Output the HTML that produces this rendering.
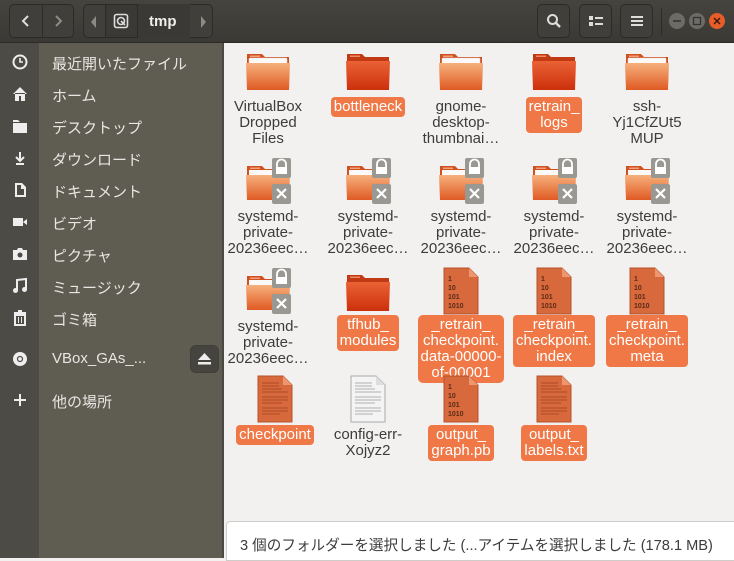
<!DOCTYPE html>
<html><head><meta charset="utf-8"><style>
*{margin:0;padding:0;box-sizing:border-box}
body{width:734px;height:558px;overflow:hidden;background:#f2f1f0;font-family:"Liberation Sans","Noto Sans CJK JP",sans-serif;position:relative}
.hdr{position:absolute;left:0;top:0;width:734px;height:43px;background:linear-gradient(#45443f,#3a3935);border-bottom:1px solid #2b2a27}
.btn{position:absolute;top:4px;height:34px;border:1px solid #2c2b28;border-radius:5px;background:#403f3b}
.side1{position:absolute;left:0;top:43px;width:39px;height:515px;background:#4c4b45}
.side2{position:absolute;left:39px;top:43px;width:185px;height:515px;background:#5f5c52;border-right:2px solid #4a4943}
.si{position:absolute;left:52px;color:#e8e6e1;font-size:15px}
.ic{position:absolute;left:11px;width:18px;height:18px}
.it{position:absolute;width:100px;text-align:center;font-size:15px;line-height:16px;color:#3c3c3c}
.it .ico{display:block;margin:0 auto}
.sel{display:inline-block;background:#ef7846;color:#fff;border-radius:4px;padding:2px 3px}
.status{position:absolute;left:226px;top:521px;width:510px;height:40px;background:#fff;border:1px solid #cfcdca;border-radius:4px 0 0 0;font-size:14.6px;color:#3c3c3c;padding:12px 0 0 13px;white-space:nowrap}
</style></head><body>
<div class="hdr">
 <div class="btn" style="left:9px;width:65px"><div style="position:absolute;left:32px;top:0;width:1px;height:32px;background:#2c2b28"></div>
  <svg style="position:absolute;left:8px;top:8px" width="16" height="16"><path d="M10 3 L5 8 L10 13" stroke="#ddd" stroke-width="2" fill="none"/></svg>
  <svg style="position:absolute;left:40px;top:8px" width="16" height="16"><path d="M6 3 L11 8 L6 13" stroke="#8d8b86" stroke-width="2" fill="none"/></svg></div>
 <div class="btn" style="left:83px;width:130px"><svg style="position:absolute;left:6px;top:11px" width="8" height="12"><path d="M6 0 L1 6 L6 12Z" fill="#8d8b86"/></svg>
  <div style="position:absolute;left:21px;top:-1px;width:33px;height:34px;background:#3a3935;border:1px solid #2c2b28"></div>
  <svg style="position:absolute;left:29px;top:8px" width="16" height="16"><rect x="1.5" y="1.5" width="13" height="13" rx="2" fill="none" stroke="#ddd" stroke-width="1.6"/><circle cx="8" cy="8" r="3.5" fill="none" stroke="#ddd" stroke-width="1.6"/><path d="M8 8 L12 12" stroke="#ddd" stroke-width="1.6"/></svg>
  <div style="position:absolute;left:54px;top:-1px;width:52px;height:34px;background:#3a3935"></div>
  <span style="position:absolute;left:65px;top:8px;color:#eee;font-weight:bold;font-size:15px">tmp</span>
  <svg style="position:absolute;left:116px;top:11px" width="8" height="12"><path d="M1 0 L6 6 L1 12Z" fill="#8d8b86"/></svg></div>
 <div class="btn" style="left:537px;width:33px"><svg style="position:absolute;left:8px;top:8px" width="16" height="16"><circle cx="6.5" cy="6.5" r="4.5" fill="none" stroke="#ddd" stroke-width="2"/><path d="M10 10 L14 14" stroke="#ddd" stroke-width="2.4"/></svg></div>
 <div class="btn" style="left:579px;width:33px"><svg style="position:absolute;left:8px;top:9px" width="16" height="14"><rect x="1" y="2" width="4" height="4" fill="#ddd"/><rect x="1" y="8" width="4" height="4" fill="#ddd"/><rect x="7" y="3" width="8" height="2" fill="#ddd"/><rect x="7" y="9" width="8" height="2" fill="#ddd"/></svg></div>
 <div class="btn" style="left:620px;width:33px"><svg style="position:absolute;left:9px;top:9px" width="14" height="14"><rect x="1" y="2" width="12" height="2" fill="#ddd"/><rect x="1" y="6" width="12" height="2" fill="#ddd"/><rect x="1" y="10" width="12" height="2" fill="#ddd"/></svg></div>
 <div style="position:absolute;left:661px;top:8px;width:1px;height:27px;background:#2c2b28"></div>
 <svg style="position:absolute;left:668px;top:11px" width="62" height="20"><circle cx="9" cy="10" r="8" fill="#6d6b66"/><path d="M5 10h8" stroke="#333" stroke-width="1.5"/><circle cx="29" cy="10" r="8" fill="#6d6b66"/><rect x="25.5" y="6.5" width="7" height="7" fill="none" stroke="#333" stroke-width="1.3"/><circle cx="49" cy="10" r="8" fill="#e75d28"/><path d="M46 7l6 6M52 7l-6 6" stroke="#3a1a10" stroke-width="1.5"/></svg>
</div>
<div class="side1"></div><div class="side2"></div>
<svg class="ic" style="top:53px" viewBox="0 0 18 18"><circle cx="9" cy="9" r="6.5" fill="none" stroke="#eee" stroke-width="2"/><path d="M9 5v4h3" stroke="#eee" stroke-width="1.6" fill="none"/></svg>
<div class="si" style="top:53px">最近開いたファイル</div>
<svg class="ic" style="top:85px" viewBox="0 0 18 18"><path d="M2 9 L9 2 L16 9 M4 8v8h4v-5h2v5h4V8" fill="#eee"/></svg>
<div class="si" style="top:85px">ホーム</div>
<svg class="ic" style="top:117px" viewBox="0 0 18 18"><path d="M2 3h5l2 2h-7z M2 6h14v10H2z" fill="#eee"/></svg>
<div class="si" style="top:117px">デスクトップ</div>
<svg class="ic" style="top:149px" viewBox="0 0 18 18"><path d="M9 3v8 M5 8l4 4 4-4 M5 15h8" stroke="#eee" stroke-width="2" fill="none"/></svg>
<div class="si" style="top:149px">ダウンロード</div>
<svg class="ic" style="top:181px" viewBox="0 0 18 18"><path d="M4 2h7l4 4v10H4z" fill="#eee"/><path d="M6 4h4v4h3v6H6z" fill="#4c4b45"/></svg>
<div class="si" style="top:181px">ドキュメント</div>
<svg class="ic" style="top:213px" viewBox="0 0 18 18"><rect x="2" y="5" width="10" height="8" fill="#eee"/><path d="M12 9l4-3v6z" fill="#eee"/></svg>
<div class="si" style="top:213px">ビデオ</div>
<svg class="ic" style="top:245px" viewBox="0 0 18 18"><path d="M2 5h4l1-2h4l1 2h4v10H2z" fill="#eee"/><circle cx="9" cy="10" r="2.5" fill="#4c4b45"/></svg>
<div class="si" style="top:245px">ピクチャ</div>
<svg class="ic" style="top:277px" viewBox="0 0 18 18"><path d="M6 13V3l9-1v10" stroke="#eee" stroke-width="2" fill="none"/><circle cx="4.5" cy="13.5" r="2.5" fill="#eee"/><circle cx="13.5" cy="12.5" r="2.5" fill="#eee"/></svg>
<div class="si" style="top:277px">ミュージック</div>
<svg class="ic" style="top:309px" viewBox="0 0 18 18"><path d="M3 4h12M7 2h4" stroke="#eee" stroke-width="2"/><path d="M4 6h10v10H4z" fill="none" stroke="#eee" stroke-width="2"/><path d="M7.5 8v6M10.5 8v6" stroke="#eee"/></svg>
<div class="si" style="top:309px">ゴミ箱</div>
<svg class="ic" style="top:350px" viewBox="0 0 18 18"><circle cx="9" cy="9" r="7" fill="#eee"/><circle cx="9" cy="9" r="2.5" fill="none" stroke="#4c4b45" stroke-width="1.2"/></svg>
<div class="si" style="top:350px">VBox_GAs_...</div>
<div style="position:absolute;left:190px;top:345px;width:29px;height:28px;background:#45443e;border:1px solid #3f3e39;border-radius:6px"></div>
<svg style="position:absolute;left:197px;top:352px" width="15" height="14"><path d="M7.5 1L14 8H1z" fill="#eee"/><rect x="1" y="10" width="13" height="2.5" fill="#eee"/></svg>
<svg class="ic" style="top:391px" viewBox="0 0 18 18"><path d="M9 3v12M3 9h12" stroke="#eee" stroke-width="2"/></svg>
<div class="si" style="top:391px">他の場所</div>

<svg width="0" height="0" style="position:absolute"><defs>
<linearGradient id="fo" x1="0" y1="0" x2="0" y2="1"><stop offset="0" stop-color="#f6b07c"/><stop offset="1" stop-color="#e05a24"/></linearGradient>
<linearGradient id="fr" x1="0" y1="0" x2="0" y2="1"><stop offset="0" stop-color="#ea6236"/><stop offset="1" stop-color="#cc300c"/></linearGradient>
<symbol id="folder" viewBox="0 0 48 40"><path d="M3 2h15l3 3h24v33H3z" fill="#d05020"/><rect x="5" y="6" width="38" height="12" rx="1" fill="#fbfaf8" stroke="#ddd" stroke-width="0.5"/><rect x="6" y="3.5" width="10" height="1.5" fill="#f0a080"/><path d="M2 11h44l-1 27H3z" fill="url(#fo)"/></symbol>
<symbol id="rfolder" viewBox="0 0 48 40"><path d="M3 2h15l3 3h24v33H3z" fill="#c23a14"/><rect x="6" y="3.5" width="10" height="1.5" fill="#ee8a66"/><path d="M2 9h44l-1 29H3z" fill="url(#fr)"/></symbol>
<symbol id="bin" viewBox="0 0 36 48"><path d="M1 1h25l9 9v37H1z" fill="#d8693d" stroke="#b5532c"/><path d="M26 1v9h9" fill="#ee9670"/><text x="5" y="14" font-size="7" font-family="Liberation Sans" font-weight="bold" fill="#5a2a16">1</text><text x="5" y="23" font-size="7" font-family="Liberation Sans" font-weight="bold" fill="#5a2a16">10</text><text x="5" y="32" font-size="7" font-family="Liberation Sans" font-weight="bold" fill="#5a2a16">101</text><text x="5" y="41" font-size="7" font-family="Liberation Sans" font-weight="bold" fill="#5a2a16">1010</text></symbol>
<symbol id="txt" viewBox="0 0 36 48"><path d="M1 1h25l9 9v37H1z" fill="#d8693d" stroke="#b5532c"/><path d="M26 1v9h9" fill="#ee9670"/><g stroke="#9a3f1e" stroke-width="0.8"><path d="M5 8h17M5 11h17M5 14h20M5 17h26M5 22h26M5 25h26M5 28h20M5 33h26M5 36h26M5 39h18"/></g></symbol>
<symbol id="wtxt" viewBox="0 0 36 48"><path d="M1 1h25l9 9v37H1z" fill="#f4f4f4" stroke="#aaa"/><path d="M26 1v9h9" fill="#ddd"/><g stroke="#999" stroke-width="0.8"><path d="M5 8h17M5 11h17M5 14h20M5 17h26M5 22h26M5 25h26M5 28h20M5 33h26M5 36h26M5 39h18"/></g></symbol>
<symbol id="lock" viewBox="0 0 48 48"><path d="M3 8h15l3 3h24v31H3z" fill="#d05020"/><rect x="5" y="12" width="38" height="12" fill="#fbfaf8"/><rect x="6" y="9.5" width="10" height="1.5" fill="#f0a080"/><path d="M2 17h44l-1 25H3z" fill="url(#fo)"/><rect x="28" y="0" width="19" height="20" rx="2" fill="#9a9893"/><path d="M33 9V6a4.5 4.5 0 0 1 9 0v3" stroke="#fff" stroke-width="1.8" fill="none"/><rect x="32" y="9" width="11" height="7" fill="#fff"/><rect x="28" y="26" width="19" height="20" rx="2" fill="#9a9893"/><path d="M33 31l9 9M42 31l-9 9" stroke="#fff" stroke-width="2.2"/></symbol>
</defs></svg>

<!-- row 1 -->
<div class="it" style="left:218px;top:52px"><svg class="ico" width="48" height="40"><use href="#folder"/></svg><div style="margin-top:7px">VirtualBox<br>Dropped<br>Files</div></div>
<div class="it" style="left:318px;top:52px"><svg class="ico" width="48" height="40"><use href="#rfolder"/></svg><div style="margin-top:5px"><span class="sel">bottleneck</span></div></div>
<div class="it" style="left:411px;top:52px"><svg class="ico" width="48" height="40"><use href="#folder"/></svg><div style="margin-top:7px">gnome-<br>desktop-<br>thumbnai…</div></div>
<div class="it" style="left:504px;top:52px"><svg class="ico" width="48" height="40"><use href="#rfolder"/></svg><div style="margin-top:5px"><span class="sel">retrain_<br>logs</span></div></div>
<div class="it" style="left:597px;top:52px"><svg class="ico" width="48" height="40"><use href="#folder"/></svg><div style="margin-top:7px">ssh-<br>Yj1CfZUt5<br>MUP</div></div>
<!-- row 2 -->
<div class="it" style="left:218px;top:158px"><svg class="ico" width="48" height="48"><use href="#lock"/></svg><div style="margin-top:3px">systemd-<br>private-<br>20236eec…</div></div>
<div class="it" style="left:318px;top:158px"><svg class="ico" width="48" height="48"><use href="#lock"/></svg><div style="margin-top:3px">systemd-<br>private-<br>20236eec…</div></div>
<div class="it" style="left:411px;top:158px"><svg class="ico" width="48" height="48"><use href="#lock"/></svg><div style="margin-top:3px">systemd-<br>private-<br>20236eec…</div></div>
<div class="it" style="left:504px;top:158px"><svg class="ico" width="48" height="48"><use href="#lock"/></svg><div style="margin-top:3px">systemd-<br>private-<br>20236eec…</div></div>
<div class="it" style="left:597px;top:158px"><svg class="ico" width="48" height="48"><use href="#lock"/></svg><div style="margin-top:3px">systemd-<br>private-<br>20236eec…</div></div>
<!-- row 3 -->
<div class="it" style="left:218px;top:268px"><svg class="ico" width="48" height="48"><use href="#lock"/></svg><div style="margin-top:3px">systemd-<br>private-<br>20236eec…</div></div>
<div class="it" style="left:318px;top:273px"><svg class="ico" width="48" height="40"><use href="#rfolder"/></svg><div style="margin-top:2px"><span class="sel">tfhub_<br>modules</span></div></div>
<div class="it" style="left:411px;top:267px"><svg class="ico" width="36" height="48"><use href="#bin"/></svg><div style="margin-top:0"><span class="sel" style="border-radius:5px">_retrain_<br>checkpoint.<br>data-00000-<br>of-00001</span></div></div>
<div class="it" style="left:504px;top:267px"><svg class="ico" width="36" height="48"><use href="#bin"/></svg><div style="margin-top:0"><span class="sel">_retrain_<br>checkpoint.<br>index</span></div></div>
<div class="it" style="left:597px;top:267px"><svg class="ico" width="36" height="48"><use href="#bin"/></svg><div style="margin-top:0"><span class="sel">_retrain_<br>checkpoint.<br>meta</span></div></div>
<!-- row 4 -->
<div class="it" style="left:225px;top:375px"><svg class="ico" width="36" height="48"><use href="#txt"/></svg><div style="margin-top:2px"><span class="sel">checkpoint</span></div></div>
<div class="it" style="left:318px;top:375px"><svg class="ico" width="36" height="48"><use href="#wtxt"/></svg><div style="margin-top:4px">config-err-<br>Xojyz2</div></div>
<div class="it" style="left:411px;top:375px;z-index:2"><svg class="ico" width="36" height="48"><use href="#bin"/></svg><div style="margin-top:2px"><span class="sel">output_<br>graph.pb</span></div></div>
<div class="it" style="left:504px;top:375px"><svg class="ico" width="36" height="48"><use href="#txt"/></svg><div style="margin-top:2px"><span class="sel">output_<br>labels.txt</span></div></div>

<div class="status">3 個のフォルダーを選択しました (...アイテムを選択しました (178.1 MB)</div>
</body></html>
